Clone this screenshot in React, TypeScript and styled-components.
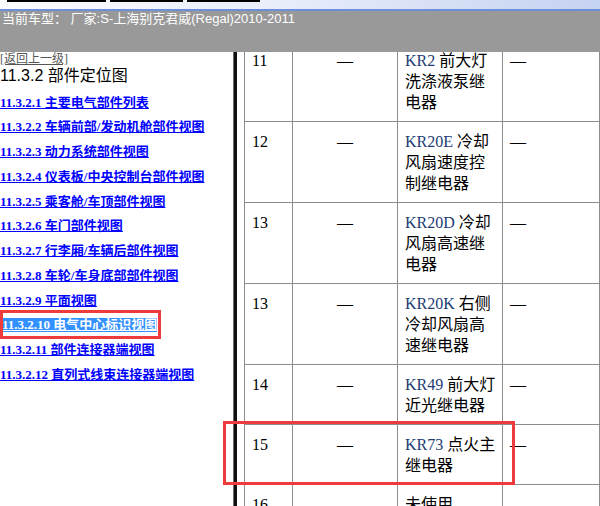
import React from 'react'
import styled, { createGlobalStyle } from 'styled-components'

type RelayRow = {
  no: string
  code: string
  name: string
}

const navLinks: string[] = [
  '11.3.2.1 主要电气部件列表',
  '11.3.2.2 车辆前部/发动机舱部件视图',
  '11.3.2.3 动力系统部件视图',
  '11.3.2.4 仪表板/中央控制台部件视图',
  '11.3.2.5 乘客舱/车顶部件视图',
  '11.3.2.6 车门部件视图',
  '11.3.2.7 行李厢/车辆后部件视图',
  '11.3.2.8 车轮/车身底部部件视图',
  '11.3.2.9 平面视图',
  '11.3.2.10 电气中心标识视图',
  '11.3.2.11 部件连接器端视图',
  '11.3.2.12 直列式线束连接器端视图',
]

const relays: RelayRow[] = [
  { no: '11', code: 'KR2', name: '前大灯洗涤液泵继电器' },
  { no: '12', code: 'KR20E', name: '冷却风扇速度控制继电器' },
  { no: '13', code: 'KR20D', name: '冷却风扇高速继电器' },
  { no: '13', code: 'KR20K', name: '右侧冷却风扇高速继电器' },
  { no: '14', code: 'KR49', name: '前大灯近光继电器' },
  { no: '15', code: 'KR73', name: '点火主继电器' },
  { no: '16', code: '', name: '未使用' },
]

const SELECTED = '11.3.2.10 电气中心标识视图'

const App = () => {
  return (
    <Window>
      <GlobalStyle />
      <TitleStrip>
        <StripTab $w={99} />
        <StripTab $w={73} />
        <StripTab $w={73} />
      </TitleStrip>
      <CarBar>当前车型： 厂家:S-上海别克君威(Regal)2010-2011</CarBar>
      <Frames>
        <NavFrame>
          <BackLink href="#">[返回上一级]</BackLink>
          <NavTitle>11.3.2 部件定位图</NavTitle>
          <NavList>
            {navLinks.map((text) => (
              <NavLink key={text} href="#" $selected={text === SELECTED}>
                {text}
              </NavLink>
            ))}
          </NavList>
        </NavFrame>
        <Splitter />
        <ContentFrame>
          <Sheet>
            <colgroup>
              <col style={{ width: 48 }} />
              <col style={{ width: 105 }} />
              <col style={{ width: 105 }} />
              <col style={{ width: 97 }} />
            </colgroup>
            <tbody>
              {relays.map((row, i) => (
                <tr key={i}>
                  <Cell>{row.no}</Cell>
                  <Cell $center>—</Cell>
                  <Cell>
                    {row.code && <Code>{row.code}</Code>}
                    {row.code ? ' ' : ''}
                    {row.name}
                  </Cell>
                  <Cell>—</Cell>
                </tr>
              ))}
            </tbody>
          </Sheet>
        </ContentFrame>
      </Frames>
      <Mark $x={0} $y={310} $w={161} $h={29} />
      <Mark $x={223} $y={421} $w={292} $h={64} />
    </Window>
  )
}

const GlobalStyle = createGlobalStyle`
  html, body {
    margin: 0;
    padding: 0;
    background: #fff;
    overflow: hidden;
  }
  body {
    font-family: "Liberation Serif", "Noto Sans CJK SC", serif;
  }
`

const Window = styled.div`
  position: relative;
  width: 600px;
  height: 506px;
  display: flex;
  flex-direction: column;
  overflow: hidden;
  background: #fff;
`

const TitleStrip = styled.div`
  flex-shrink: 0;
  height: 9px;
  display: flex;
  gap: 4px;
  padding-left: 7px;
  background: linear-gradient(to right, #fbfcfe 0%, #e9eefa 45%, #c5d2f1 100%);
  border-bottom: 2px solid #6d8ed8;
`

const StripTab = styled.div<{ $w: number }>`
  width: ${(p) => p.$w}px;
  height: 2px;
  background: #000;
`

const CarBar = styled.div`
  flex-shrink: 0;
  height: 41px;
  padding-left: 2px;
  background: #999;
  color: #fff;
  font: 13px/16px "Liberation Sans", "Noto Sans CJK SC", sans-serif;
  white-space: nowrap;
`

const Frames = styled.div`
  flex: 1;
  min-height: 0;
  display: flex;
`

const NavFrame = styled.div`
  width: 233px;
  flex-shrink: 0;
  background: #fff;
  overflow: hidden;
`

const BackLink = styled.a`
  display: block;
  width: max-content;
  font: 12px/14px "Liberation Serif", "Noto Sans CJK SC", serif;
  color: #555;
  text-decoration: underline;
`

const NavTitle = styled.h3`
  margin: 0;
  font: 16px/20px "Liberation Sans", "Noto Sans CJK SC", sans-serif;
  color: #000;
`

const NavList = styled.div`
  display: flex;
  flex-direction: column;
  align-items: flex-start;
  gap: 10.75px;
  padding-top: 9.7px;
`

const NavLink = styled.a<{ $selected?: boolean }>`
  font: bold 13px/14px "Liberation Serif", "Noto Sans CJK SC", serif;
  color: ${(p) => (p.$selected ? '#fff' : '#0000ff')};
  background: ${(p) => (p.$selected ? '#3390ff' : 'transparent')};
  margin-left: ${(p) => (p.$selected ? '2px' : '0')};
  text-decoration: underline;
  white-space: nowrap;
`

const Splitter = styled.div`
  width: 3px;
  flex-shrink: 0;
  border-left: 1px solid #6a6a6a;
  background: #111;
`

const ContentFrame = styled.div`
  flex: 1;
  min-width: 0;
  overflow: hidden;
  padding-left: 7px;
  background: #fff;
`

const Sheet = styled.table`
  margin-top: -12px;
  width: 355px;
  border-collapse: collapse;
  table-layout: fixed;
  font: 16px/21px "Liberation Serif", "Noto Sans CJK SC", serif;
  color: #000;
`

const Cell = styled.td<{ $center?: boolean }>`
  border: 1px solid #8c8c8c;
  padding: ${(p) => (p.$center ? '9px 4px 8px 4px' : '9px 4px 8px 7px')};
  vertical-align: top;
  text-align: ${(p) => (p.$center ? 'center' : 'left')};
`

const Code = styled.span`
  color: #213c74;
`

const Mark = styled.div<{ $x: number; $y: number; $w: number; $h: number }>`
  position: absolute;
  left: ${(p) => p.$x}px;
  top: ${(p) => p.$y}px;
  width: ${(p) => p.$w}px;
  height: ${(p) => p.$h}px;
  box-sizing: border-box;
  border: 3px solid #ef3b3b;
  pointer-events: none;
`

export default App
